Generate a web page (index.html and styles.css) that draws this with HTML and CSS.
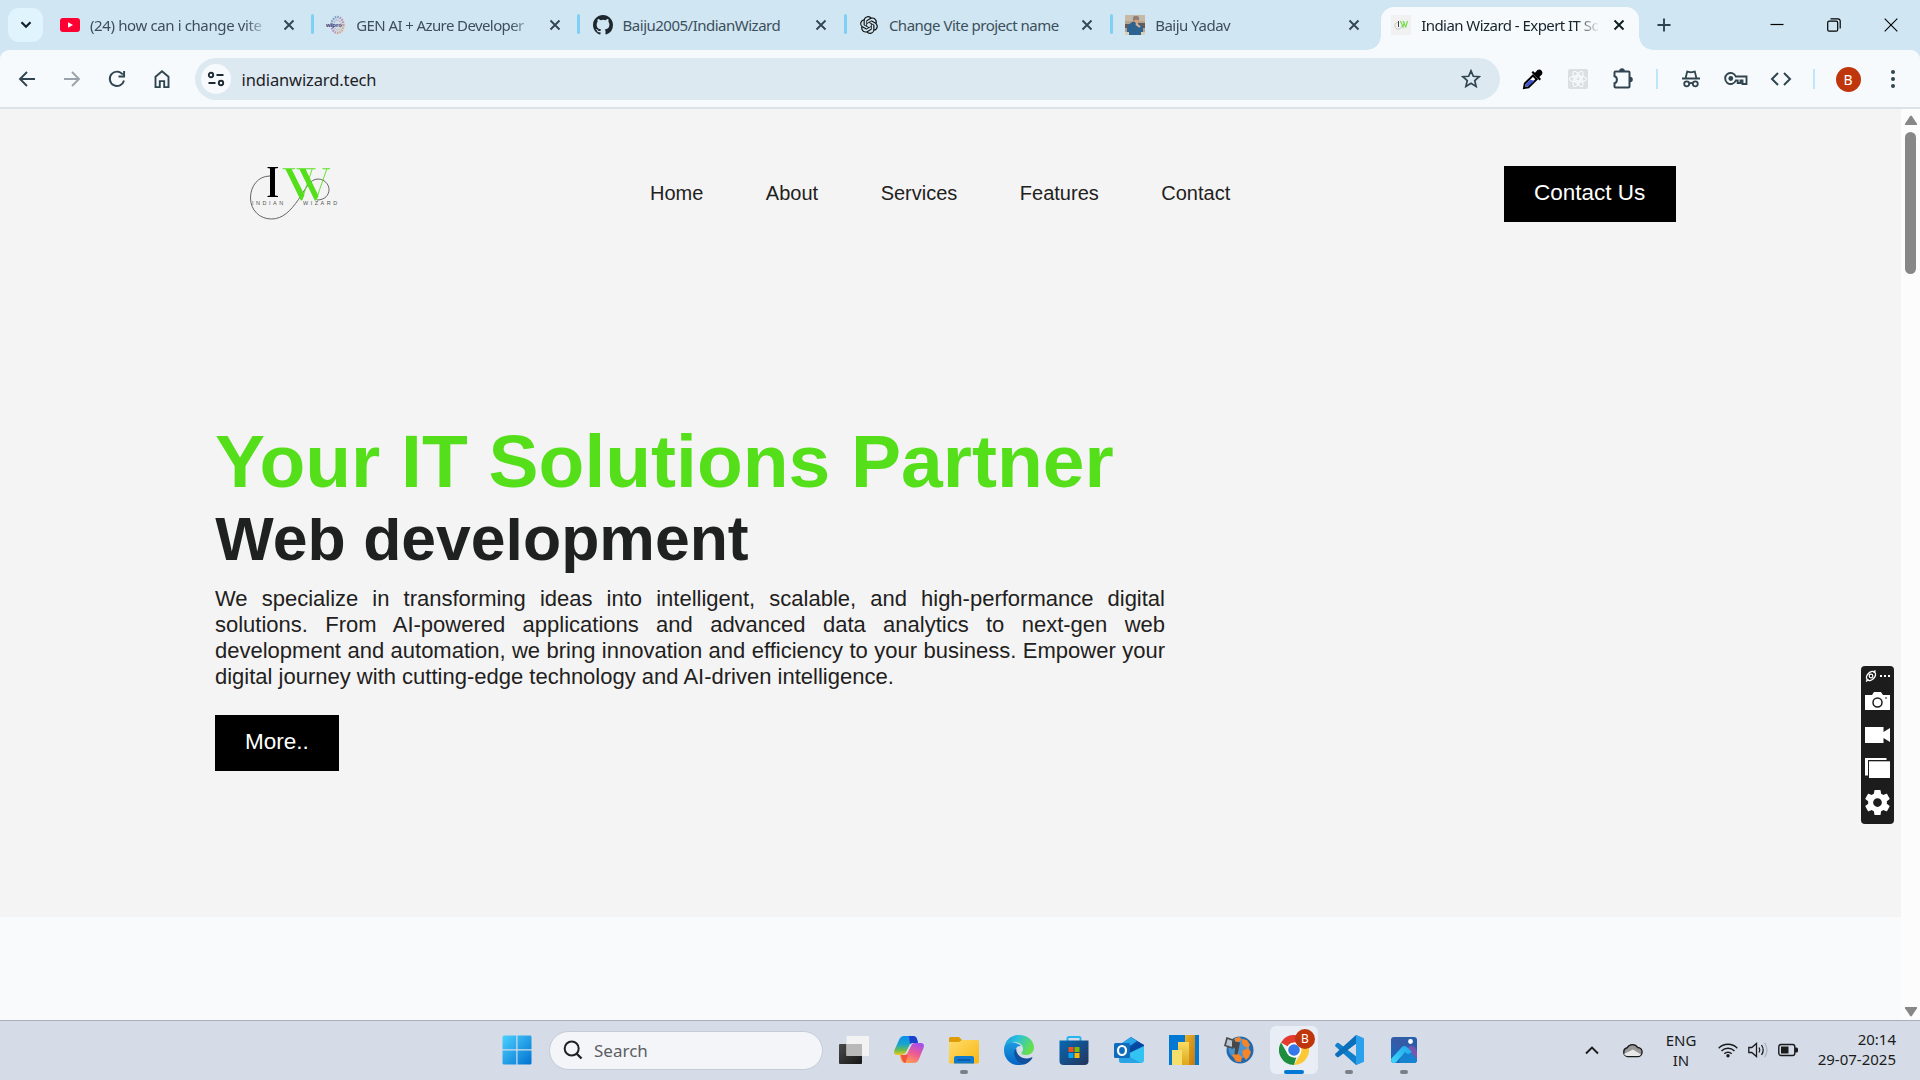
FILE: index.html
```html
<!DOCTYPE html>
<html lang="en">
<head>
<meta charset="utf-8">
<title>Indian Wizard - Expert IT Solutions</title>
<link rel="stylesheet" href="styles.css">
</head>
<body>
<svg width="0" height="0" class="defs" aria-hidden="true">
  <defs>
    <symbol id="x" viewBox="0 0 12 12"><path d="M1.500 1.500l9 9m0-9l-9 9" fill="none" stroke="currentColor" stroke-width="1.900"/></symbol>
    <linearGradient id="win" x1="0" y1="0" x2="1" y2="1"><stop offset="0" stop-color="#4cd0ff"/><stop offset="1" stop-color="#0072d0"/></linearGradient>
    <linearGradient id="dark" x1="0" y1="0" x2="1" y2="1"><stop offset="0" stop-color="#4a4a4a"/><stop offset="1" stop-color="#161616"/></linearGradient>
    <linearGradient id="copA" x1="0" y1="0" x2="0" y2="1"><stop offset="0" stop-color="#0d8df0"/><stop offset=".45" stop-color="#1aa7c8"/><stop offset=".75" stop-color="#6dbb4d"/><stop offset="1" stop-color="#f4c81c"/></linearGradient>
    <linearGradient id="copB" x1=".8" y1="0" x2=".3" y2="1"><stop offset="0" stop-color="#a14ff0"/><stop offset=".5" stop-color="#ee5b93"/><stop offset="1" stop-color="#ffa14e"/></linearGradient>
    <linearGradient id="fold" x1="0" y1="0" x2="1" y2="1"><stop offset="0" stop-color="#ffdc6b"/><stop offset="1" stop-color="#f8b713"/></linearGradient>
    <linearGradient id="edgeA" x1="0" y1="0" x2="1" y2=".4"><stop offset="0" stop-color="#1591dd"/><stop offset=".45" stop-color="#2bc2da"/><stop offset="1" stop-color="#64e04e"/></linearGradient>
    <linearGradient id="edgeB" x1="0" y1="0" x2="0" y2="1"><stop offset="0" stop-color="#1c9ce0"/><stop offset="1" stop-color="#0562c4"/></linearGradient>
    <linearGradient id="store" x1="0" y1="0" x2="1" y2="1"><stop offset="0" stop-color="#0669b4"/><stop offset="1" stop-color="#25335c"/></linearGradient>
    <linearGradient id="gold" x1="0" y1="0" x2="1" y2="1"><stop offset="0" stop-color="#e9b327"/><stop offset="1" stop-color="#c6780e"/></linearGradient>
    <linearGradient id="gold2" x1="0" y1="0" x2="0" y2="1"><stop offset="0" stop-color="#f9dc63"/><stop offset="1" stop-color="#dca61a"/></linearGradient>
    <linearGradient id="photo" x1="0" y1="1" x2="1" y2="0"><stop offset="0" stop-color="#0f70c8"/><stop offset=".5" stop-color="#355aa8"/><stop offset="1" stop-color="#2a5fa8"/></linearGradient>
    <linearGradient id="hill" x1="0" y1="1" x2="1" y2="0"><stop offset="0" stop-color="#3fd8fb"/><stop offset="1" stop-color="#21a5e8"/></linearGradient>
    <linearGradient id="wip" x1="0" y1="0" x2="1" y2="1"><stop offset="0" stop-color="#62a9c7"/><stop offset=".5" stop-color="#b98ac0"/><stop offset="1" stop-color="#e6b46b"/></linearGradient>
  </defs>
</svg>

<div class="tabs">
  <div class="tab-search"><svg width="12" height="8" viewBox="0 0 12 8"><path d="M1.500 1.200L6 5.800l4.500-4.600" fill="none" stroke="#13202a" stroke-width="2.200"/></svg></div>
  <div class="tab">
    <svg width="20" height="20" viewBox="0 0 20 20"><rect y="3" width="20" height="14" rx="3" fill="#ff0033"/><path d="M8 7.200v5.600l5-2.800z" fill="#fff"/></svg>
    <span class="title t1">(24) how can i change vite</span><svg class="close"><use href="#x"/></svg>
  </div>
  <div class="tab">
    <svg width="20" height="20" viewBox="0 0 20 20"><ellipse cx="11.500" cy="10" rx="6" ry="8" fill="#cfdde6" stroke="url(#wip)" stroke-width="2.400" stroke-dasharray="1.500 1"/><ellipse cx="11.500" cy="10" rx="3.500" ry="5" fill="none" stroke="url(#wip)" stroke-dasharray="1.200 1"/><text x="0" y="12" class="wipro">wipro</text></svg>
    <span class="title t2">GEN AI + Azure Developer</span><svg class="close"><use href="#x"/></svg>
  </div>
  <div class="tab">
    <svg width="20" height="20" viewBox="0 0 16 16"><path fill="#1f272e" d="M8 0C3.580 0 0 3.580 0 8c0 3.540 2.290 6.530 5.470 7.590.4.070.55-.17.55-.38 0-.19-.01-.82-.01-1.490-2.010.37-2.530-.49-2.690-.94-.09-.23-.48-.94-.82-1.130-.28-.15-.68-.52-.01-.53.63-.01 1.080.58 1.230.82.72 1.210 1.870.87 2.330.66.07-.52.28-.87.51-1.070-1.780-.2-3.640-.89-3.640-3.950 0-.87.31-1.590.82-2.150-.08-.2-.36-1.020.08-2.120 0 0 .67-.21 2.200.82a7.600 7.600 0 014 0c1.530-1.040 2.200-.82 2.200-.82.44 1.100.16 1.920.08 2.120.51.56.82 1.270.82 2.150 0 3.070-1.870 3.750-3.650 3.950.29.25.54.73.54 1.480 0 1.070-.01 1.930-.01 2.200 0 .21.15.46.55.38A8 8 0 0016 8c0-4.420-3.580-8-8-8z"/></svg>
    <span class="title t3">Baiju2005/IndianWizard</span><svg class="close"><use href="#x"/></svg>
  </div>
  <div class="tab">
    <svg width="20" height="20" viewBox="-1.500 -1.500 27 27"><path fill="#111" d="M22.282 9.821a5.985 5.985 0 0 0-.516-4.910 6.046 6.046 0 0 0-6.510-2.900A6.065 6.065 0 0 0 4.981 4.182a5.985 5.985 0 0 0-3.998 2.900 6.046 6.046 0 0 0 .743 7.097 5.980 5.980 0 0 0 .51 4.911 6.051 6.051 0 0 0 6.515 2.900A5.985 5.985 0 0 0 13.260 24a6.056 6.056 0 0 0 5.772-4.206 5.990 5.990 0 0 0 3.998-2.900 6.056 6.056 0 0 0-.748-7.073zM13.260 22.430a4.476 4.476 0 0 1-2.876-1.040l.141-.081 4.779-2.758a.795.795 0 0 0 .392-.681v-6.737l2.020 1.168a.071.071 0 0 1 .038.052v5.583a4.504 4.504 0 0 1-4.494 4.494zM3.600 18.304a4.470 4.470 0 0 1-.535-3.014l.142.085 4.783 2.759a.771.771 0 0 0 .780 0l5.843-3.369v2.332a.080.080 0 0 1-.033.062L9.740 19.950a4.500 4.500 0 0 1-6.140-1.646zM2.340 7.896a4.485 4.485 0 0 1 2.366-1.973V11.600a.766.766 0 0 0 .388.676l5.815 3.355-2.020 1.168a.076.076 0 0 1-.071 0l-4.830-2.786A4.504 4.504 0 0 1 2.340 7.872zm16.597 3.855l-5.833-3.387L15.119 7.200a.076.076 0 0 1 .071 0l4.830 2.791a4.494 4.494 0 0 1-.676 8.105v-5.678a.790.790 0 0 0-.407-.667zm2.010-3.023l-.141-.085-4.774-2.782a.776.776 0 0 0-.785 0L9.409 9.230V6.897a.066.066 0 0 1 .028-.061l4.830-2.787a4.500 4.500 0 0 1 6.680 4.660zm-12.640 4.135l-2.020-1.164a.080.080 0 0 1-.038-.057V6.075a4.500 4.500 0 0 1 7.375-3.453l-.142.080L8.704 5.460a.795.795 0 0 0-.393.681zm1.097-2.365l2.602-1.500 2.607 1.500v2.999l-2.597 1.500-2.607-1.500z"/></svg>
    <span class="title t4">Change Vite project name</span><svg class="close"><use href="#x"/></svg>
  </div>
  <div class="tab last">
    <svg width="20" height="20" viewBox="0 0 20 20"><rect width="20" height="20" fill="#b5a48f"/><path d="M0 9h7v4H0zM14 8h6v5h-6z" fill="#6b5a50"/><path d="M0 0h20v6H0z" fill="#c6b9a6"/><path d="M2 20V11l5-4h6l5 5v8z" fill="#2d6391"/><circle cx="11" cy="4" r="3.200" fill="#8c8078"/><path d="M9 5h5l-1 4h-2z" fill="#d8a37d"/><path d="M11 9l4 3" stroke="#e2b48f" stroke-width="2"/><path d="M0 17h4v3H0zM16 17h4v3h-4z" fill="#ddd0bb"/></svg>
    <span class="title t5">Baiju Yadav</span><svg class="close"><use href="#x"/></svg>
  </div>
  <div class="tab active">
    <svg width="20" height="20" viewBox="0 0 20 20"><rect width="20" height="20" fill="#f1f1f1"/><path d="M7.500 6v6" stroke="#444" stroke-width="1"/><path d="M9.500 6l2.500 6 1.500-5M12 6l2.800 6 1.700-6" fill="none" stroke="#6fdd44" stroke-width="1.100"/><path d="M7 7.500c-4 0-4 6-.5 6.500 3 .5 4-2 5.500-4" fill="none" stroke="#aaa" stroke-width=".6"/></svg>
    <span class="title t6">Indian Wizard - Expert IT So</span><svg class="close"><use href="#x"/></svg>
  </div>
  <svg class="plus" width="14" height="14" viewBox="0 0 14 14"><path d="M7 .5v13M.5 7h13" stroke="#30424e" stroke-width="1.900"/></svg>
  <div class="win-controls">
    <svg width="14" height="14" viewBox="0 0 14 14"><path d="M.5 6.500h13" stroke="#000" stroke-width="1.200"/></svg>
    <svg width="14" height="14" viewBox="0 0 14 14"><rect x=".7" y="3.200" width="10" height="10" rx="1.500" fill="none" stroke="#000" stroke-width="1.200"/><path d="M3.500 .9H11a2.200 2.200 0 0 1 2.200 2.200v7.500" fill="none" stroke="#000" stroke-width="1.200"/></svg>
    <svg width="14" height="14" viewBox="0 0 14 14"><path d="M.7 .7l12.600 12.600m0-12.600L.7 13.300" stroke="#000" stroke-width="1.100"/></svg>
  </div>
</div>

<div class="toolbar">
  <div class="nav-buttons">
    <svg width="20" height="20" viewBox="0 0 20 20"><path d="M18 10H3.500M10 3l-7 7 7 7" fill="none" stroke="#30454f" stroke-width="1.900"/></svg>
    <svg width="20" height="20" viewBox="0 0 20 20"><path d="M2 10h14.500M10 3l7 7-7 7" fill="none" stroke="#9aa3aa" stroke-width="1.900"/></svg>
    <svg width="20" height="20" viewBox="0 0 20 20"><path d="M15.800 5.500A7.200 7.200 0 1 0 17 11.500M17.100 2v5.500h-5.600" fill="none" stroke="#30454f" stroke-width="1.900"/></svg>
    <svg width="20" height="20" viewBox="0 0 20 20"><path d="M3.500 7.800L10 2.200l6.500 5.600v10.300h-4.300v-6H7.800v6H3.500z" fill="none" stroke="#30454f" stroke-width="1.900"/></svg>
  </div>
  <div class="omnibox">
    <div class="site"><svg width="18" height="16" viewBox="0 0 18 16"><g fill="none" stroke="#1c2b33" stroke-width="1.900"><circle cx="4" cy="4" r="2.200"/><path d="M9.500 4h7M1.500 12h7"/><circle cx="14" cy="12" r="2.200"/></g></svg></div>
    <span class="url">indianwizard.tech</span>
    <svg width="20" height="20" viewBox="0 0 20 20"><path d="M10 1.800l2.350 5.450 5.900.5-4.500 3.850 1.370 5.780L10 14.300l-5.120 3.080 1.370-5.780-4.500-3.850 5.900-.5z" fill="none" stroke="#30454f" stroke-width="1.700"/></svg>
  </div>
  <div class="ext">
    <svg width="22" height="22" viewBox="0 0 22 22"><path d="M2 20l.8-4.500L11 7.500l3.700 3.700L6.500 19.300z" fill="#fff" stroke="#000" stroke-width="2"/><path d="M3.300 18.700l.6-3 4.300-4 4.300 1-6.200 5.500z" fill="#4053c8"/><path d="M9.500 4.500l8 8 1.500-1.500-1.700-1.900L20 6.500A3.300 3.300 0 0 0 15.500 2L13 4.700l-2-1.700z" fill="#000"/></svg>
    <svg width="22" height="22" viewBox="0 0 22 22"><rect x="1" y="1" width="20" height="20" rx="2" fill="#dadfe2"/><g fill="none" stroke="#fafcfd" stroke-width="1.100"><ellipse cx="11" cy="11" rx="8.500" ry="3.300"/><ellipse cx="11" cy="11" rx="8.500" ry="3.300" transform="rotate(60 11 11)"/><ellipse cx="11" cy="11" rx="8.500" ry="3.300" transform="rotate(120 11 11)"/><circle cx="11" cy="11" r="2"/></g></svg>
    <svg width="22" height="22" viewBox="0 0 22 22"><path d="M3.500 3.500h13a1 1 0 0 1 1 1v14a1 1 0 0 1-1 1h-13a1 1 0 0 1-1-1v-3.200c3.200-.8 3.200-6.200 0-7V4.500a1 1 0 0 1 1-1z" fill="none" stroke="#30454f" stroke-width="2"/><path d="M7.200 3a2.800 2.800 0 0 1 5.600 0zM18 8.700a2.800 2.800 0 0 1 0 5.600z" fill="#30454f"/></svg>
    <i class="bar"></i>
    <svg width="20" height="20" viewBox="0 0 20 20"><g fill="none" stroke="#30454f" stroke-width="1.800"><path d="M1 9.500h18M4.500 9.500L6.200 2.500 10 3.400l3.800-.9 1.700 7"/><circle cx="5.700" cy="14.800" r="2.500"/><circle cx="14.300" cy="14.800" r="2.500"/><path d="M8.300 14.500q1.700-1 3.400 0"/></g></svg>
    <svg width="24" height="20" viewBox="0 0 24 20"><g fill="none" stroke="#30454f" stroke-width="1.900"><path d="M11.800 7.500H22.500V15h-4v-3.500h-2V14h-2.800v-2.500h-1.900a5.500 5.500 0 1 1 0-4z"/></g><circle cx="6.800" cy="9.500" r="2.400" fill="#30454f"/></svg>
    <svg width="22" height="20" viewBox="0 0 22 20"><path d="M8 4L2 10l6 6M14 4l6 6-6 6" fill="none" stroke="#30454f" stroke-width="2"/></svg>
    <i class="bar"></i>
    <b class="avatar">B</b>
    <svg width="6" height="20" viewBox="0 0 6 20"><g fill="#30454f"><circle cx="3" cy="3" r="2"/><circle cx="3" cy="10" r="2"/><circle cx="3" cy="17" r="2"/></g></svg>
  </div>
</div>

<div class="viewport">
  <div class="page">
    <section class="hero">
      <header class="site-header">
        <svg class="logo" width="92" height="56" viewBox="0 0 92 56">
          <path d="M23 10C11 10 3.500 20 3.500 32c0 12 9 21 21 21 11 0 19-8 27-19.500 7-10 11-20.500 19.500-20.500 6 0 11 5 11 10.500S78 34 70 34" fill="none" stroke="#555" stroke-width=".9"/>
          <path d="M20.500 1H31v.9l-3 .6v27l3 .6v.9H20.500v-.9l2.500-.6v-27l-2.500-.6z" fill="#000"/>
          <path d="M35.500 2.300H48v1h-3.300L57.500 29l-2.700 5.500h-1L38.500 3.300h-3zM49.500 2.300h19v1h-9.800L71.500 30 69 34.500h-1.200L52.500 3.300h-3zM75.500 2.300H83v1h-7.500z" fill="#53df1a"/>
          <path d="M54.800 34L65.200 3M69 34L79.800 3" stroke="#53df1a" stroke-width=".9"/>
          <text x="5" y="39.300" class="logo-text">INDIAN</text><text x="56" y="39.300" class="logo-text">WIZARD</text>
        </svg>
        <nav class="menu"><a>Home</a><a>About</a><a>Services</a><a>Features</a><a>Contact</a></nav>
        <a class="btn">Contact Us</a>
      </header>
      <div class="intro">
        <h1>Your IT Solutions Partner</h1>
        <div class="rotator"><h2>Web development</h2></div>
        <p>We specialize in transforming ideas into intelligent, scalable, and high-performance digital solutions. From AI-powered applications and advanced data analytics to next-gen web development and automation, we bring innovation and efficiency to your business. Empower your digital journey with cutting-edge technology and AI-driven intelligence.</p>
        <a class="btn">More..</a>
      </div>
    </section>
  </div>
  <div class="scrollbar">
    <svg width="14" height="11" viewBox="0 0 14 11"><path d="M6 1.200L1 8.800q-.6 1.200.7 1.200h10.600q1.300 0 .7-1.200L8 1.200q-1-1.200-2 0z" fill="#878787"/></svg>
    <div class="thumb"></div>
    <svg class="down" width="14" height="11" viewBox="0 0 14 11"><path d="M6 9.800L1 2.200Q.4 1 1.700 1h10.600q1.300 0 .7 1.200L8 9.800q-1 1.200-2 0z" fill="#878787"/></svg>
  </div>
</div>

<div class="capture">
  <svg width="25" height="14" viewBox="0 0 25 14"><ellipse cx="6" cy="7" rx="5.200" ry="3.600" transform="rotate(-45 6 7)" fill="none" stroke="#fff" stroke-width="1.500"/><circle cx="6" cy="7" r="1.800" fill="none" stroke="#fff" stroke-width="1.200"/><path d="M1 12.500l2.500-2M8.500 3.500l2-2" stroke="#fff" stroke-width="1.500"/><path d="M15 6h2v2h-2zM19 6h2v2h-2zM23 6h2v2h-2z" fill="#fff"/></svg>
  <svg width="25" height="18" viewBox="0 0 25 18"><path d="M0 3h7l2-3h7l2 3h7v15H0z" fill="#fff"/><circle cx="12.500" cy="10.500" r="4.500" fill="none" stroke="#1c1c1c" stroke-width="1.500"/><path d="M20 6h2" stroke="#1c1c1c" stroke-width="1.200"/></svg>
  <svg width="25" height="16" viewBox="0 0 25 16"><path d="M0 0h18.500v5L25 1v14l-6.500-4v5H0z" fill="#fff"/></svg>
  <svg width="25" height="20" viewBox="0 0 25 20"><path d="M0 0h21.500v2H3v15.500H0z" fill="#fff"/><path d="M4 3.300h21V20H4z" fill="#fff"/></svg>
  <svg width="25" height="25" viewBox="2 2 20 20"><path fill="#fff" d="M19.430 12.980c.04-.32.07-.64.07-.98s-.03-.66-.07-.98l2.110-1.650c.19-.15.24-.42.12-.64l-2-3.460c-.12-.22-.39-.3-.61-.22l-2.490 1c-.52-.4-1.080-.73-1.690-.98l-.38-2.650A.488.488 0 0 0 14 2h-4c-.25 0-.46.180-.49.420l-.38 2.650c-.61.250-1.170.590-1.690.980l-2.490-1c-.23-.09-.49 0-.61.220l-2 3.460c-.13.220-.07.490.12.640l2.110 1.650c-.04.320-.07.650-.07.980s.03.660.07.980l-2.110 1.650c-.19.150-.24.420-.12.640l2 3.460c.12.220.39.300.61.220l2.490-1c.52.400 1.080.730 1.690.980l.38 2.650c.03.240.24.420.49.420h4c.25 0 .46-.18.49-.42l.38-2.650c.61-.25 1.170-.59 1.690-.98l2.490 1c.23.090.49 0 .61-.22l2-3.460c.12-.22.07-.49-.12-.64zM12 15.500a3.500 3.500 0 1 1 0-7 3.500 3.500 0 0 1 0 7z"/></svg>
</div>

<div class="taskbar">
  <div class="apps">
    <svg class="start" width="30" height="30" viewBox="0 0 30 30"><path d="M2 .5h12.300v13.800H.5V2A1.500 1.500 0 0 1 2 .5zM15.500 .5H28A1.500 1.500 0 0 1 29.500 2v12.300h-14zM.5 15.500h13.800v14H2A1.500 1.500 0 0 1 .5 28zM15.500 15.500h14V28a1.500 1.500 0 0 1-1.500 1.500H15.500z" fill="url(#win)"/></svg>
    <div class="search"><svg width="20" height="20" viewBox="0 0 20 20"><circle cx="8.700" cy="8.500" r="7" fill="none" stroke="#222" stroke-width="2"/><path d="M13.500 13.500l5 5" stroke="#222" stroke-width="2.400"/></svg><span>Search</span></div>
    <div class="app"><svg width="30" height="30" viewBox="0 0 30 30"><rect y="9" width="23" height="20" rx="1" fill="url(#dark)"/><rect x="7.500" y="1" width="22.500" height="20" rx="1" fill="#f3f3f3"/><path d="M7.500 9H23v12H7.500z" fill="#b9b9b9"/></svg></div>
    <div class="app"><svg width="30" height="30" viewBox="0 0 30 30"><path d="M10 1h9q3 0 4 3l1 4h-5q-3 0-4 3l-3 6q-1.500 3-4 3H3q-4 0-2.500-5L5 5q1.500-4 5-4z" fill="url(#copA)"/><path d="M15 1h4q3 0 4 3l1 4h-5q-2 0-3 1z" fill="#1b3fcf"/><path d="M20 28h-9q-3 0-4-3l-1-5h4q3 0 4-3l3-6q1-3 4-3h6q4 0 2.500 5L25 24q-1.500 4-5 4z" fill="url(#copB)"/><path d="M7 20h5q1-.5 2 0l-2.500 8Q8.500 28 7 20z" fill="#f2543c"/></svg></div>
    <div class="app open"><svg width="30" height="30" viewBox="0 0 30 30"><path d="M1.500 2H10l3 3H28v8H0V3.500Q0 2 1.500 2z" fill="#e09c07"/><path d="M0 7h10l3-2h15.500Q30 5 30 6.500V27q0 1.500-1.500 1.500h-27Q0 28.500 0 27z" fill="url(#fold)"/><path d="M5 28.500V23q0-2 2-2h16q2 0 2 2v5.500z" fill="#0f78cf"/><path d="M8.500 25h13" stroke="#064c93" stroke-width="1.200"/></svg></div>
    <div class="app"><svg width="30" height="30" viewBox="0 0 30 30"><path d="M0 14C1 5 7 0 15 0c9 0 15 6 15 12.500 0 5-4 7.500-8 7.500-3.500 0-5-1-4.500-2 1-1.500 1.500-2.500 1.500-4C19 9 14 6.500 9 7.500 4 8.500 1 11 0 14z" fill="url(#edgeA)"/><path d="M0 15C0 9 5 7 9 7.500c3 .3 6 1.500 8 3.500-4-.5-6.500 3-6 7 .5 6 5 10 10 11C10 33 0 26 0 15z" fill="url(#edgeB)"/><path d="M12.300 13.500C8 16 10 27 20 29.500 24 28.500 27 25.500 28.300 23c.3-.8-.3-1-1-.6C20 25.500 12 21 12.300 13.500z" fill="#124f9c"/></svg></div>
    <div class="app"><svg width="30" height="30" viewBox="0 0 30 30"><path d="M8.500 8V3.500q0-1.500 1.500-1.500h10q1.500 0 1.500 1.500V8" fill="none" stroke="#28b4f0" stroke-width="2"/><path d="M.5 5.500h29V26q0 4-4 4h-21q-4 0-4-4z" fill="url(#store)"/><path d="M9.500 12h5v5h-5z" fill="#f25022"/><path d="M15.500 12h5v5h-5z" fill="#7fba00"/><path d="M9.500 18h5v5h-5z" fill="#00a4ef"/><path d="M15.500 18h5v5h-5z" fill="#ffb900"/></svg></div>
    <div class="app"><svg width="30" height="30" viewBox="0 0 30 30"><path d="M4 11L17 2l13 8v12L17 25 4 20z" fill="#0a4fa6"/><path d="M5 10l12-8 6 4-13 9z" fill="#2aa5e8"/><path d="M17 18l13-8-5-2.500L12 16z" fill="#0547a0"/><path d="M30 11v14q0 3-3 3H8q-3 0-3-3v-2z" fill="#33c3f3"/><path d="M5 16l22 12H8q-3 0-3-3z" fill="#28a3e3"/><rect y="8" width="16" height="15" rx="1.500" fill="#0f6cbd"/><ellipse cx="8" cy="15.500" rx="4" ry="4.500" fill="none" stroke="#fff" stroke-width="2.200"/></svg></div>
    <div class="app"><svg width="30" height="30" viewBox="0 0 30 30"><path d="M0 0h30v30H0z" fill="#0078d4"/><path d="M16 0h10v30H16z" fill="url(#gold)"/><path d="M9 7h11v23H9z" fill="url(#gold2)"/><path d="M3 15h10v15H3z" fill="#f5de6c"/></svg></div>
    <div class="app"><svg width="30" height="30" viewBox="0 0 30 30"><circle cx="16" cy="15" r="13.500" fill="#2368ab"/><circle cx="15" cy="13.500" r="10.500" fill="#4a93cd"/><path d="M11 3l5-1 1.500 3-3 2-4-1zM18 4l5 1 3 5-2 3-4-2-2-3zM18 16l6-3 3 4-2 5-3 3-3-4zM8 20l5-2 5 4-1 5-5-.5z" fill="#f5852a"/><path d="M3 3l7 2.500L8.500 13 1 10.500z" fill="#b9c5d2" stroke="#4b4b4b" stroke-width="1.700"/><path d="M8 6l8 1.500-1 5-1.500 7h-3l.5-6-3-2z" fill="#484848"/></svg></div>
    <div class="app current"><svg width="30" height="30" viewBox="0 0 30 30"><path d="M15 15L2 7.500A15 15 0 0 1 28 7.500H15z" fill="#e33b2e"/><path d="M15 7.500h13A15 15 0 0 1 15 30l6.500-11.300z" fill="#fcc934"/><path d="M2 7.500l6.500 11.300L15 22.500h2.200L15 30A15 15 0 0 1 2 7.500z" fill="#1e8e3e"/><circle cx="15" cy="15" r="7.500" fill="#fff"/><circle cx="15" cy="15" r="5.800" fill="#3478ea"/></svg><b class="badge">B</b></div>
    <div class="app open"><svg width="30" height="30" viewBox="0 0 30 30"><path d="M22 0l7 3q1 .5 1 1.500v21q0 1-1 1.500l-7 3L1.500 11.500q-1-1 0-2L3 8q.8-.6 1.700 0L22 21z" fill="#1180cc"/><path d="M22 0L1.500 18.500q-1 1 0 2L3 22q.9.600 1.700 0L22 9z" fill="#0b6fbb"/><path d="M22 0l7 3q1 .5 1 1.500v21q0 1-1 1.500l-7 3z" fill="#2ba1ee"/><path d="M22 9v12l-8-6z" fill="#d5dce8"/></svg></div>
    <div class="app open"><svg width="30" height="30" viewBox="0 0 30 30"><rect x="2" y="2" width="26" height="26" rx="3" fill="url(#photo)"/><path d="M21 11q7-1 7 8v6L17 15z" fill="#7556b0"/><path d="M13 15q3-3 6 0l9 9q0 4-3 4H10z" fill="#1583cf"/><path d="M2 24l11-12q3-2.500 6 1l4 4-4 2-3-2L7 27.500 5 28q-3 0-3-4z" fill="url(#hill)"/><circle cx="21.500" cy="6.500" r="2.400" fill="#fff"/></svg></div>
  </div>
  <div class="tray">
    <svg width="14" height="9" viewBox="0 0 14 9"><path d="M1 7.500l6-6 6 6" fill="none" stroke="#1b1b1b" stroke-width="1.900"/></svg>
    <svg class="cloud" width="21" height="15" viewBox="0 0 21 15"><path d="M5.500 13.500a4.500 4.500 0 0 1-.3-8.800A6 6 0 0 1 15.600 4.500a4.500 4.500 0 0 1 0 9z" fill="#999" stroke="#1b1b1b" stroke-width="1.400"/><path d="M1.800 11L11 6.500l8 5q-1 1.500-3.500 1.500h-10Q3 13 1.800 11z" fill="#e9e9e9"/></svg>
    <div class="lang">ENG<br>IN</div>
    <div class="status">
      <svg width="20" height="16" viewBox="0 0 20 16"><g fill="none" stroke="#1b1b1b" stroke-width="1.400"><path d="M.7 6.200a13 13 0 0 1 18.600 0M3.500 9a9.200 9.200 0 0 1 13 0M6.300 11.700a5.300 5.300 0 0 1 7.400 0"/></g><circle cx="10" cy="13.800" r="1.700" fill="#1b1b1b"/></svg>
      <svg width="20" height="16" viewBox="0 0 20 16"><g fill="none" stroke="#1b1b1b" stroke-width="1.300"><path d="M.8 5.500h3L8.500 1.500v13l-4.700-4h-3zM11 5.500q1.600 2.500 0 5M13.500 3q3.400 5 0 10"/><path d="M16.500 .8q5 7.200 0 14.400" stroke="#aeb4c0"/></g></svg>
      <svg width="20" height="14" viewBox="0 0 20 14"><rect x=".8" y="1.500" width="16" height="11" rx="2.200" fill="none" stroke="#1b1b1b" stroke-width="1.400"/><path d="M3 3.500h7.500v7H3zM17 4.500h1.500q1.500 0 1.500 1.500v2q0 1.500-1.500 1.500H17z" fill="#1b1b1b"/></svg>
    </div>
    <div class="clock">20:14<br>29-07-2025</div>
  </div>
</div>
</body>
</html>
```
FILE: styles.css
```css
* { box-sizing: border-box; }
body { margin: 0; width: 1920px; height: 1080px; overflow: hidden; display: flex; flex-direction: column; background: #d0e6f2; font-family: "Liberation Sans", Arial, sans-serif; position: relative; }
svg { display: block; flex: none; }
.defs { position: absolute; }

.tabs { height: 50px; flex: none; background: #d0e6f2; display: flex; align-items: center; padding-left: 8px; font-family: "Noto Sans", sans-serif; color: #3c4f5b; }
.tab-search { width: 35px; height: 34px; border-radius: 11px; background: #e0f4fe; display: flex; align-items: center; justify-content: center; margin-right: 17px; }
.tab { width: 266.300px; height: 20px; display: flex; align-items: center; position: relative; flex: none; }
.tab::after { content: ""; position: absolute; left: 251px; top: -1px; width: 3px; height: 20px; border-radius: 2px; background: #7fd0f5; }
.tab .title { margin-left: 10px; width: 177px; overflow: hidden; white-space: nowrap; font-size: 15px; line-height: 22px; letter-spacing: -.5px; -webkit-mask-image: linear-gradient(to right, #000 155px, transparent 179px); mask-image: linear-gradient(to right, #000 155px, transparent 179px); }
.tab .t1 { letter-spacing: -.38px; }
.tab .t2 { letter-spacing: -.6px; }
.tab .t3, .tab .t4 { -webkit-mask-image: none; mask-image: none; }
.tab .t6 { letter-spacing: -.55px; }
.close { width: 12px; height: 12px; margin-left: 15.500px; color: #34464f; }
.tab.last { width: 255px; }
.tab.last::after, .tab.active::after { display: none; }
.tab.active { width: 258px; height: 43px; align-self: flex-end; background: #f7fafd; border-radius: 13px 13px 0 0; padding: 0 0 7px 10px; color: #16232b; margin-left: 1px; }
.tab.active::before { content: ""; position: absolute; left: -14px; right: -14px; bottom: 0; height: 14px; background: radial-gradient(circle at 0 0, transparent 13.500px, #f7fafd 14px) left / 14px 14px no-repeat, radial-gradient(circle at 100% 0, transparent 13.500px, #f7fafd 14px) right / 14px 14px no-repeat; }
.active .close { color: #111c22; margin-left: 14.500px; }
.wipro { font: bold 6px "Liberation Sans", sans-serif; fill: #3d3672; }
.plus { margin-left: 18px; }
.win-controls { display: flex; gap: 43px; margin-left: auto; padding-right: 22px; }

.toolbar { height: 59px; flex: none; display: flex; align-items: center; background: #f7fafd; border-bottom: 2px solid #dbe2e8; border-radius: 9px 9px 0 0; padding: 1px 0 0 17px; }
.nav-buttons { display: flex; gap: 25px; }
.omnibox { width: 1305px; height: 42px; margin-left: 23px; border-radius: 21px; background: #dde9f1; display: flex; align-items: center; padding: 0 19px 0 6px; font-family: "Noto Sans", sans-serif; }
.site { width: 30px; height: 30px; border-radius: 50%; background: #f7fafd; display: flex; align-items: center; justify-content: center; }
.url { margin: 0 auto 0 10.500px; font-size: 16.500px; letter-spacing: -.12px; color: #1c2226; }
.ext { display: grid; grid-template-columns: repeat(3, 45px) 22.500px repeat(3, 45px) 22.500px 45px 45px; align-items: center; justify-items: center; margin-left: 10.500px; }
.bar { width: 2px; height: 20px; background: #bfe5fa; }
.avatar { width: 25px; height: 25px; border-radius: 50%; background: #bf360c; color: #fff; font: 14px/25px "Noto Sans", sans-serif; text-align: center; }

.viewport { height: 911px; flex: none; display: flex; }
.page { width: 1901px; background: #f8fafc; }
.hero { height: 808px; background: #f4f4f4; padding: 57px 225px 0 215px; }
.site-header { height: 56px; display: flex; align-items: center; padding-left: 32px; }
.site-header .btn { margin-left: auto; min-width: 172px; }
.logo-text { font: 5.500px "Liberation Sans", sans-serif; fill: #555; letter-spacing: 2.500px; }
.menu { display: flex; gap: 62.500px; margin: 0 0 2px 311px; font-size: 20px; color: #1f2120; }
.btn { display: inline-block; height: 56px; line-height: 54px; padding: 0 30px; background: #000; color: #fff; font-size: 22.500px; }
.intro { width: 951px; margin-top: 197px; color: #1f2120; }
h1 { margin: 0; padding-bottom: 2px; font-size: 75px; line-height: 84px; color: #55df1a; white-space: nowrap; }
.rotator { height: 62px; margin-top: 13px; overflow: hidden; }
h2 { margin: -16px 0 0; font-size: 62.500px; line-height: 72px; }
p { margin: 6px 0 25px; font-size: 22px; line-height: 26px; text-align: justify; width: 950px; }

.scrollbar { width: 19px; background: #fcfcfc; display: flex; flex-direction: column; align-items: center; padding: 6px 0 3px; }
.thumb { width: 11px; height: 142px; border-radius: 6px; background: #878787; margin-top: 6px; }
.down { margin-top: auto; }

.capture { position: absolute; left: 1861px; top: 666px; width: 33px; height: 158px; border-radius: 4px; background: #1c1c1c; display: flex; flex-direction: column; align-items: center; padding-top: 3px; }
.capture svg:nth-child(2) { margin-top: 9px; }
.capture svg:nth-child(3) { margin-top: 17px; }
.capture svg:nth-child(4) { margin-top: 15px; }
.capture svg:nth-child(5) { margin-top: 12px; }

.taskbar { height: 60px; flex: none; background: #d5dce8; border-top: 1px solid #a9b0ba; display: flex; align-items: center; justify-content: space-between; padding: 0 24px 1px 502px; font-family: "Noto Sans", sans-serif; color: #1b1b1b; }
.apps { display: flex; align-items: center; }
.search { width: 274px; height: 39px; margin: 0 7px 0 17px; border-radius: 20px; background: #f3f5f9; border: 1px solid #c4cbd7; display: flex; align-items: center; padding-left: 13px; gap: 11px; font-size: 17px; color: #5c5e62; }
.app { width: 48px; height: 48px; margin-right: 7px; border-radius: 6px; display: flex; align-items: center; justify-content: center; position: relative; }
.open::after, .current::after { content: ""; position: absolute; left: 20px; bottom: 0; width: 8px; height: 4px; border-radius: 2px; background: #7b7f86; }
.current { background: #e9edf5; }
.current::after { left: 14px; width: 20px; background: #0078d4; }
.badge { position: absolute; left: 25px; top: 3px; width: 20px; height: 20px; border-radius: 50%; background: #bf360c; color: #fff; font: 12px/20px "Noto Sans", sans-serif; text-align: center; }
.tray { display: flex; align-items: center; font-size: 15px; line-height: 20px; }
.cloud { margin-left: 23px; }
.lang { text-align: center; width: 40px; margin: 0 17px 1px 18px; }
.status { display: flex; align-items: center; gap: 10px; }
.clock { width: 98px; margin-bottom: 3px; text-align: right; white-space: nowrap; }
```
